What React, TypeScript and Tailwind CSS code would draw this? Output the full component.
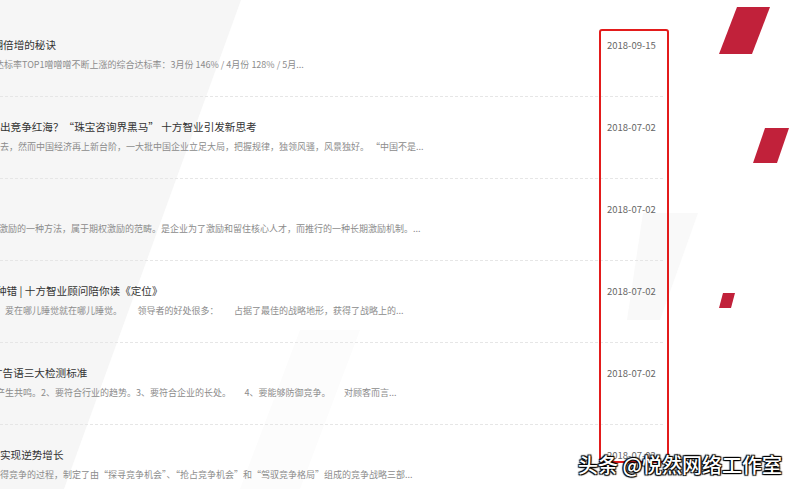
import React from "react";

type Row = {
  title: string;
  titleShift: string;
  desc: string;
  descShift: string;
  date: string;
};

const rows: Row[] = [
  {
    title: "翻倍增的秘诀",
    titleShift: "ml-[-7.5px]",
    desc: "达标率TOP1噌噌噌不断上涨的综合达标率：3月份 146% / 4月份 128% / 5月...",
    descShift: "ml-[-5px]",
    date: "2018-09-15",
  },
  {
    title: "出竞争红海？“珠宝咨询界黑马” 十方智业引发新思考",
    titleShift: "ml-0",
    desc: "去，然而中国经济再上新台阶，一大批中国企业立足大局，把握规律，独领风骚，风景独好。 “中国不是...",
    descShift: "ml-0",
    date: "2018-07-02",
  },
  {
    title: "",
    titleShift: "ml-0",
    desc: "激励的一种方法，属于期权激励的范畴。是企业为了激励和留住核心人才，而推行的一种长期激励机制。...",
    descShift: "ml-[-1px]",
    date: "2018-07-02",
  },
  {
    title: "种错 | 十方智业顾问陪你读《定位》",
    titleShift: "ml-[-4px]",
    desc: "　爱在哪儿睡觉就在哪儿睡觉。　　 领导者的好处很多：　　 占据了最佳的战略地形，获得了战略上的...",
    descShift: "ml-[-4px]",
    date: "2018-07-02",
  },
  {
    title: "广告语三大检测标准",
    titleShift: "ml-[-8px]",
    desc: "产生共鸣。2、要符合行业的趋势。3、要符合企业的长处。　　4、要能够防御竞争。　　对顾客而言...",
    descShift: "ml-[-4px]",
    date: "2018-07-02",
  },
  {
    title: "实现逆势增长",
    titleShift: "ml-0",
    desc: "得竞争的过程，制定了由“探寻竞争机会”、“抢占竞争机会”和“驾驭竞争格局”组成的竞争战略三部...",
    descShift: "ml-0",
    date: "2018-07-02",
  },
];

export default function App() {
  return (
    <div className="relative w-[800px] h-[489px] overflow-hidden bg-white font-['Noto_Sans_CJK_SC','Noto_Sans',sans-serif]">
      <svg
        className="absolute inset-0"
        width="800"
        height="489"
        viewBox="0 0 800 489"
      >
        <polygon points="0,0 241,0 64,489 0,489" fill="#f6f6f6" />
        <polygon points="300,330 360,330 300,489 240,489" fill="#fcfcfc" />
        <polygon points="643,213 698,213 660,320 627,320" fill="#f9f9f9" />
        <polygon points="737,7 770,7 752,54 719,54" fill="#c1213a" />
        <polygon points="765,128 789,128 777,163 753,163" fill="#c1213a" />
        <polygon points="723,293 735,293 731,308 719,308" fill="#c1213a" />
      </svg>

      <div className="relative w-[663px] pt-[15px] overflow-hidden">
        {rows.map((r, i) => (
          <div
            key={i}
            className="flex h-[82px] border-b border-dashed border-[#e6e6e6]"
          >
            <div className="w-[599px] overflow-hidden pt-[22px]">
              <div
                className={`h-[16px] leading-[16px] text-[10.6px] text-[#333333] whitespace-nowrap ${r.titleShift}`}
              >
                {r.title}
              </div>
              <div
                className={`mt-[5px] h-[14px] leading-[14px] text-[9px] text-[#8c8c8c] whitespace-nowrap ${r.descShift}`}
              >
                {r.desc}
              </div>
            </div>
            <div className="w-[64px] pl-[8px] pt-[22px]">
              <div className="h-[16px] leading-[16px] text-[9.5px] text-[#666666] whitespace-nowrap">
                {r.date}
              </div>
            </div>
          </div>
        ))}
      </div>

      <div className="absolute left-[599px] top-[29px] w-[70px] h-[434px] border-2 border-[#e31b1b] rounded-[3px]" />

      <div className="absolute left-[578px] top-[452px] text-[20px] leading-[26px] text-white font-medium whitespace-nowrap [text-shadow:0_0_1px_#000,1px_1px_1px_#000,-1px_-1px_1px_#000,1px_-1px_1px_#000,-1px_1px_1px_#000]">
        头条 @悦然网络工作室
      </div>
    </div>
  );
}
